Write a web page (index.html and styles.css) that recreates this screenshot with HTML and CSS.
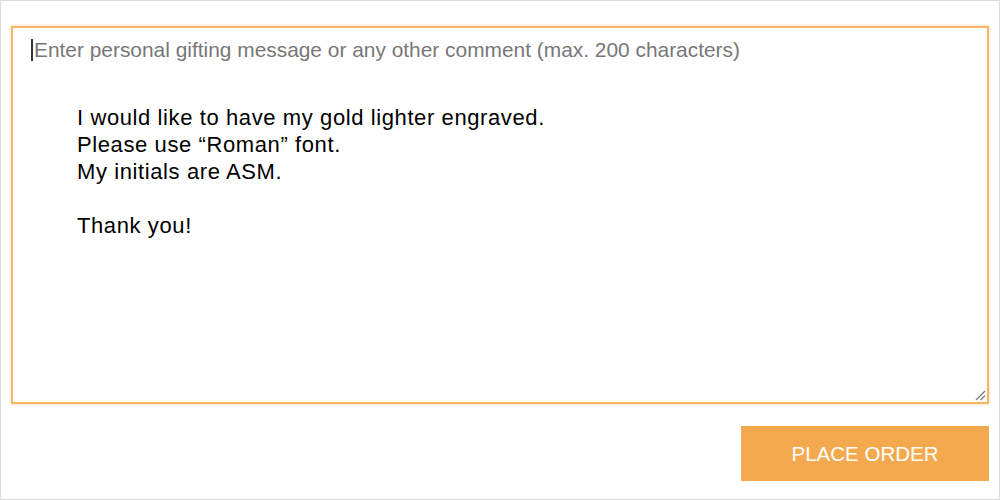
FILE: index.html
```html
<!DOCTYPE html>
<html lang="en">
<head>
    <meta charset="UTF-8">
    <meta name="viewport" content="width=device-width, initial-scale=1.0">
    <title>Gift message</title>
    <link rel="stylesheet" href="styles.css">
</head>
<body>
    <div class="page">
        <!-- comment box -->
        <div class="comment-box">
            <div class="placeholder"><span class="caret"></span>Enter personal gifting message or any other comment (max. 200 characters)</div>
            <div class="message">
                I would like to have my gold lighter engraved.<br>
                Please use “Roman” font.<br>
                My initials are ASM.<br>
                <br>
                Thank you!
            </div>
            <svg class="grip" width="12" height="12" viewBox="0 0 12 12">
                <path d="M11 2 L2 11 M11 6.5 L6.5 11" stroke="#7a7a7a" stroke-width="1.3" fill="none"/>
            </svg>
        </div>
        <div class="actions">
            <button class="order-btn">PLACE ORDER</button>
        </div>
    </div>
</body>
</html>
```

FILE: styles.css
```css
* {
    margin: 0;
    padding: 0;
    box-sizing: border-box;
}

html, body {
    width: 1000px;
    height: 500px;
    overflow: hidden;
    background: #fff;
    font-family: "Liberation Sans", Arial, sans-serif;
}

.page {
    width: 1000px;
    height: 500px;
    border: 1px solid #dcdcdc;
    padding: 25px 10px 0 10px;
    display: flex;
    flex-direction: column;
}

.comment-box {
    position: relative;
    height: 378px;
    border: 2px solid #f7b565;
    box-shadow: 0 0 3px rgba(247, 181, 101, 0.6);
    padding: 8px 18px;
}

.placeholder {
    display: flex;
    align-items: center;
    font-size: 20.9px;
    color: #777;
    height: 28px;
}

.caret {
    display: inline-block;
    width: 2px;
    height: 22px;
    background: #333;
    margin-right: 1px;
}

.message {
    margin-top: 40px;
    padding-left: 46px;
    font-size: 22px;
    letter-spacing: 0.6px;
    line-height: 27px;
    color: #000;
}

.grip {
    position: absolute;
    right: 1px;
    bottom: 1px;
}

.actions {
    display: flex;
    justify-content: flex-end;
    margin-top: 22px;
}

.order-btn {
    width: 248px;
    height: 55px;
    border: none;
    background: #f4a94f;
    color: #fff;
    font-family: "Liberation Sans", Arial, sans-serif;
    font-size: 20.5px;
}
```
